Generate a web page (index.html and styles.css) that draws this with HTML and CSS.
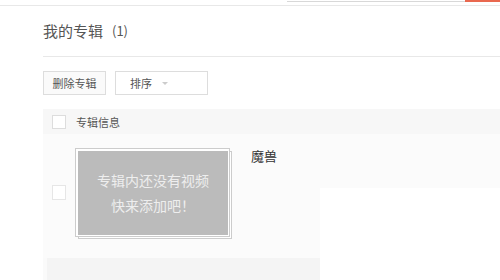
FILE: index.html
```html
<!DOCTYPE html>
<html lang="zh-CN">
<head>
    <meta charset="UTF-8">
    <title>我的专辑</title>
    <link rel="stylesheet" href="styles.css">
</head>
<body>
    <div class="topbar">
        <div class="search"></div>
        <div class="search-btn"></div>
    </div>

    <div class="main">
        <div class="title">我的专辑 <span class="count">(1)</span></div>

        <div class="toolbar">
            <button class="btn btn-delete">删除专辑</button>
            <button class="btn btn-sort">排序 <span class="arrow"></span></button>
        </div>

        <div class="list-head">
            <span class="checkbox"></span>
            <span class="head-label">专辑信息</span>
        </div>

        <div class="album-row">
            <span class="checkbox light"></span>
            <div class="thumb">
                <div class="thumb-empty">
                    <div>专辑内还没有视频</div>
                    <div>快来添加吧！</div>
                </div>
            </div>
            <div class="album-name">魔兽</div>
        </div>

        <div class="album-row next"></div>
    </div>

    <div class="overlay"></div>
</body>
</html>
```

FILE: styles.css
```css
body {
    margin: 0;
    font-family: "Noto Sans CJK SC", "Liberation Sans", sans-serif;
    background: #fff;
    overflow: hidden;
    height: 280px;
    position: relative;
}

.topbar {
    height: 5px;
    border-bottom: 1px solid #e8e8e8;
    display: flex;
    justify-content: flex-end;
    align-items: flex-start;
}

.search {
    width: 178px;
    height: 1px;
    border-bottom: 1px solid #d8d8d8;
}

.search-btn {
    width: 35px;
    height: 2px;
    background: #e9684f;
}

.main {
    padding-left: 43px;
}

.title {
    height: 48px;
    padding-bottom: 2px;
    display: flex;
    align-items: center;
    font-size: 15px;
    color: #555;
    border-bottom: 1px solid #e8e8e8;
}

.count {
    font-size: 13px;
    margin-left: 9px;
}

.toolbar {
    display: flex;
    gap: 9px;
    margin-top: 14px;
}

.btn {
    box-sizing: border-box;
    height: 24px;
    border: 1px solid #ddd;
    background: #fafafa;
    font-family: inherit;
    font-size: 11px;
    color: #555;
    padding: 0;
    display: flex;
    align-items: center;
    cursor: pointer;
}

.btn-delete {
    width: 63px;
    justify-content: center;
}

.btn-sort {
    width: 93px;
    background: #fff;
    padding-left: 14px;
}

.arrow {
    margin-left: 10px;
    width: 0;
    height: 0;
    border-left: 3px solid transparent;
    border-right: 3px solid transparent;
    border-top: 3px solid #ccc;
}

.list-head {
    margin-top: 14px;
    height: 25px;
    background: #f7f7f7;
    display: flex;
    align-items: center;
}

.checkbox {
    width: 12px;
    height: 12px;
    border: 1px solid #ddd;
    background: #fff;
    margin-left: 9px;
    flex: none;
}

.checkbox.light {
    border-color: #e6e6e6;
    height: 13px;
}

.head-label {
    margin-left: 10px;
    font-size: 11px;
    color: #555;
}

.album-row {
    position: relative;
    z-index: 0;
    height: 124px;
    background: #fbfbfb;
    display: flex;
    align-items: flex-start;
}

.album-row .checkbox {
    margin-top: 51px;
}

.thumb {
    position: relative;
    margin-left: 9px;
    margin-top: 14px;
    width: 150px;
    height: 84px;
    padding: 2px 1px 1px 2px;
    border: 1px solid #ccc;
    background: #fff;
}

.thumb::before {
    content: "";
    position: absolute;
    left: 2px;
    top: 2px;
    width: 152px;
    height: 86px;
    border: 1px solid #ccc;
    background: #fff;
    z-index: -1;
}

.thumb-empty {
    height: 100%;
    background: #bbb;
    color: #eee;
    font-size: 14px;
    line-height: 25px;
    display: flex;
    flex-direction: column;
    align-items: center;
    justify-content: center;
}

.album-name {
    margin-left: 21px;
    margin-top: 12px;
    font-size: 13px;
    color: #333;
}

.album-row.next {
    height: 30px;
    background: #f4f4f4;
    border-left: 4px solid #fafafa;
}

.overlay {
    position: absolute;
    left: 320px;
    top: 188px;
    right: 0;
    bottom: 0;
    background: #fff;
}
```
